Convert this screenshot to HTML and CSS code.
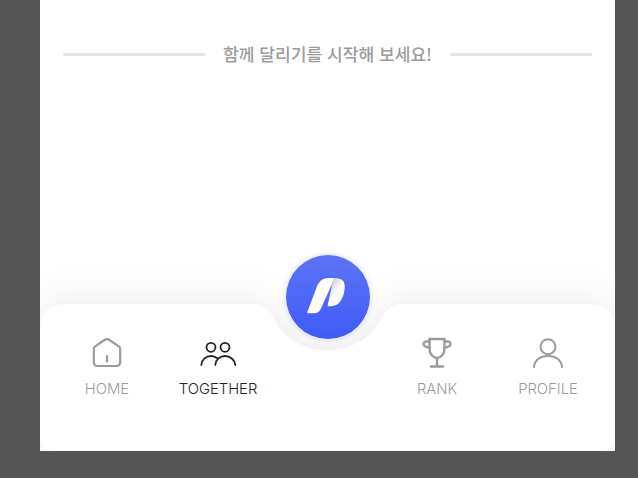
FILE: index.html
```html
<!DOCTYPE html>
<html lang="ko">
<head>
    <meta charset="UTF-8">
    <title>Together</title>
    <link rel="stylesheet" href="styles.css">
</head>
<body>
    <div class="screen">
        <div class="divider">
            <span class="divider-line"></span>
            <span class="divider-text">함께 달리기를 시작해 보세요!</span>
            <span class="divider-line"></span>
        </div>

        <div class="tabbar">
            <svg class="tabbar-bg" width="575" height="147" viewBox="0 0 575 147">
                <path fill="#fff" d="M0 26 Q0 0 26 0 H212 Q226 0 233 13 C242 33 262 46 287.500 46 C313 46 333 33 342 13 Q349 0 363 0 H549 Q575 0 575 26 V131 Q575 147 559 147 H16 Q0 147 0 131 Z"/>
            </svg>

            <div class="tab-group">
                <div class="tab">
                    <svg class="tab-icon" width="32" height="32" viewBox="0 0 32 32" fill="none" stroke="#9b9b9b" stroke-width="2.200" stroke-linecap="round" stroke-linejoin="round">
                        <path d="M2.800 13 Q2.800 11.300 4.200 10.300 L13.500 4 Q16 2.400 18.500 4 L27.800 10.300 Q29.200 11.300 29.200 13 V26 Q29.200 30 25.200 30 H6.800 Q2.800 30 2.800 26 Z"/>
                        <path d="M16 20 V25.500"/>
                    </svg>
                    <span class="tab-label">HOME</span>
                </div>
                <div class="tab tab-active">
                    <svg class="tab-icon" width="36" height="32" viewBox="0 0 36 32" fill="none" stroke="#222" stroke-width="1.800" stroke-linecap="round">
                        <circle cx="11" cy="11.300" r="4.500"/>
                        <circle cx="25" cy="11.300" r="4.500"/>
                        <path d="M1.300 29 C1.800 23.500 6 20 11 20 C13.500 20 15.500 20.800 17.300 22.300"/>
                        <path d="M15.300 29 C15.800 23.500 20 20 25 20 C30 20 34.800 23.500 35.300 29"/>
                    </svg>
                    <span class="tab-label">TOGETHER</span>
                </div>
            </div>

            <div class="tab-group">
                <div class="tab">
                    <svg class="tab-icon" width="32" height="32" viewBox="0 0 32 32" fill="none" stroke="#9b9b9b" stroke-width="2.400" stroke-linecap="round" stroke-linejoin="round">
                        <path d="M8.500 3 H23.500 V12.500 C23.500 18 20 22 16 22 C12 22 8.500 18 8.500 12.500 Z"/>
                        <path d="M8.500 5.500 H5 C2.500 5.500 1.800 8.500 3.500 10 C4.500 11 6.500 11.500 9 12"/>
                        <path d="M23.500 5.500 H27 C29.500 5.500 30.200 8.500 28.500 10 C27.500 11 25.500 11.500 23 12"/>
                        <path d="M16 22 V30"/>
                        <path d="M10 30.500 H22"/>
                    </svg>
                    <span class="tab-label">RANK</span>
                </div>
                <div class="tab">
                    <svg class="tab-icon" width="32" height="32" viewBox="0 0 32 32" fill="none" stroke="#9b9b9b" stroke-width="2" stroke-linecap="round">
                        <circle cx="16" cy="10.700" r="7.500"/>
                        <path d="M2 31 C2.500 24.500 8 20 16 20 C24 20 29.500 24.500 30 31"/>
                    </svg>
                    <span class="tab-label">PROFILE</span>
                </div>
            </div>

            <div class="start-button">
                <svg class="logo" width="38" height="36" viewBox="0 0 38 36">
                    <defs>
                        <linearGradient id="fold" x1="0.200" y1="0" x2="0.600" y2="0.450">
                            <stop offset="0" stop-color="#c4c4ca"/>
                            <stop offset="1" stop-color="#fff"/>
                        </linearGradient>
                    </defs>
                    <path fill="#fff" d="M0.300 34 L9.500 9.500 C12 3 16 0 21.500 0 H27.700 L14 30.500 C12.500 33.800 10 35.300 7.700 35.300 H1.500 Q0 35.300 0.300 34 Z"/>
                    <path fill="url(#fold)" d="M26.500 0 C34 0 37.500 2 37.700 8 C38 14 35 23 31 26 C28 28 24 28.500 20.500 28.300 Z"/>
                </svg>
            </div>
        </div>
    </div>
</body>
</html>
```

FILE: styles.css
```css
html, body {
    margin: 0;
    height: 100%;
}
body {
    background-color: #555555;
    padding-left: 40px;
    overflow: hidden;
    font-family: Inter, "Noto Sans CJK KR", sans-serif;
}
.screen {
    width: 575px;
    height: 451px;
    background-color: #fff;
    display: flex;
    flex-direction: column;
    position: relative;
    overflow: hidden;
}
.divider {
    display: flex;
    align-items: center;
    gap: 18px;
    padding: 43px 23px 0;
    height: 22px;
}
.divider-line {
    flex: 1;
    height: 3px;
    border-radius: 2px;
    background-color: #e5e5e5;
}
.divider-text {
    font-family: "Noto Sans CJK KR", sans-serif;
    font-size: 17.100px;
    font-weight: 500;
    line-height: 22px;
    color: #9b9b9b;
}
.tabbar {
    margin-top: auto;
    height: 147px;
    box-sizing: border-box;
    padding: 32px 11.500px 0;
    display: flex;
    justify-content: space-between;
    align-items: flex-start;
    position: relative;
}
.tabbar-bg {
    position: absolute;
    left: 0;
    top: 0;
    overflow: visible;
    filter: drop-shadow(0 0 20px rgba(0, 0, 0, 0.09));
}
.tab-group {
    display: flex;
    position: relative;
}
.tab {
    width: 111px;
    display: flex;
    flex-direction: column;
    align-items: center;
    gap: 11px;
    font-size: 14.800px;
    font-weight: 300;
    line-height: 20px;
    color: #9b9b9b;
}
.tab-active {
    color: #222;
}
.tab-icon {
    display: block;
}
.start-button {
    position: absolute;
    left: 246px;
    top: -49px;
    width: 84px;
    height: 84px;
    border-radius: 50%;
    background: linear-gradient(#5c74f6, #405bf6);
    box-shadow: 0 0 4px 1px rgba(120, 140, 250, 0.25);
    display: flex;
    align-items: center;
    justify-content: center;
}
.logo {
    margin: -3px 4px 0 0;
}
```
